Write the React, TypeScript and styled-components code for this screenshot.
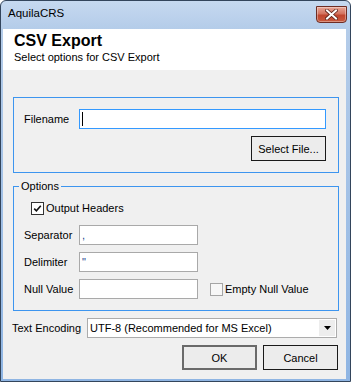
import React from 'react';
import styled, { createGlobalStyle } from 'styled-components';

const GlobalStyle = createGlobalStyle`
  html, body {
    margin: 0;
    padding: 0;
    background: #ffffff;
  }
  body {
    font-family: "Liberation Sans", Arial, sans-serif;
    font-size: 11px;
    color: #000000;
  }
  * {
    box-sizing: border-box;
  }
`;

const Window = styled.div`
  width: 351px;
  height: 382px;
  display: flex;
  flex-direction: column;
  border: 1px solid #33455c;
  border-radius: 6px 6px 0 0;
  background: linear-gradient(#c6d9f0, #b4cce9 28px, #8fb5e3);
  padding: 0 4px 2px 2px;
`;

const TitleBar = styled.div`
  height: 28px;
  display: flex;
  align-items: flex-start;
  justify-content: space-between;
  padding: 4px 0 0 5px;
`;

const TitleText = styled.span`
  font-size: 11.5px;
  line-height: 16px;
  color: #000000;
`;

const CloseButton = styled.div`
  width: 31px;
  height: 17px;
  margin-top: 1px;
  margin-right: -1px;
  border: 1px solid #6e2d24;
  border-radius: 0 0 4px 4px;
  background: linear-gradient(#e9a797, #d3735f 45%, #c0462f 55%, #c85a3e);
  display: flex;
  align-items: center;
  justify-content: center;
  box-shadow: inset 0 0 0 1px rgba(255, 255, 255, 0.35);
`;

const Client = styled.div`
  flex: 1;
  display: flex;
  flex-direction: column;
  background: #f0f0f0;
`;

const Header = styled.div`
  height: 41px;
  background: #ffffff;
  padding: 2px 0 0 11px;
`;

const HeaderTitle = styled.div`
  font-weight: bold;
  font-size: 16px;
  line-height: 19px;
`;

const HeaderSubtitle = styled.div`
  font-size: 11px;
  line-height: 15px;
`;

const Body = styled.div`
  display: flex;
  flex-direction: column;
  padding: 27px 7px 0 9px;
`;

const GroupBox = styled.fieldset<{ $top?: number }>`
  margin: ${(p) => p.$top ?? 0}px 0 0 1px;
  min-width: 0;
  border: 1px solid #3d95ef;
  display: flex;
  flex-direction: column;
  gap: 7px;
`;

const FileGroup = styled(GroupBox)`
  padding: 11px 12px 11px 10px;
`;

const OptionsGroup = styled(GroupBox)`
  padding: 5px 12px 11px 10px;
`;

const Legend = styled.legend`
  margin-left: -5px;
  padding: 0 2px;
  line-height: 13px;
  font-size: 11px;
`;

const Row = styled.div<{ $end?: boolean }>`
  display: flex;
  align-items: center;
  height: 20px;
  justify-content: ${(p) => (p.$end ? 'flex-end' : 'flex-start')};
`;

const Label = styled.span<{ $width: number }>`
  width: ${(p) => p.$width}px;
  flex-shrink: 0;
  white-space: nowrap;
`;

const TextBox = styled.div<{ $width?: number; $focused?: boolean }>`
  ${(p) => (p.$width ? `width: ${p.$width}px;` : 'flex: 1;')}
  height: 20px;
  background: #ffffff;
  border: 1px solid ${(p) => (p.$focused ? '#3399ff' : '#a9a9a9')};
  padding: 0 2px;
  display: flex;
  align-items: center;
  color: #1b3f8f;
  line-height: 16px;
`;

const Caret = styled.span`
  display: inline-block;
  width: 1px;
  height: 14px;
  background: #000000;
`;

const CheckRow = styled.label<{ $indent?: number }>`
  display: flex;
  align-items: center;
  height: 20px;
  padding-left: ${(p) => p.$indent ?? 0}px;
  margin-left: ${(p) => (p.$indent ? 0 : 12)}px;
  white-space: nowrap;
`;

const CheckBox = styled.span<{ $checked?: boolean }>`
  width: 13px;
  height: 13px;
  margin-right: 2px;
  flex-shrink: 0;
  border: 1px solid ${(p) => (p.$checked ? '#333333' : '#a5a5a5')};
  background: ${(p) => (p.$checked ? '#ffffff' : '#f7f7f7')};
  display: flex;
  align-items: center;
  justify-content: center;
`;

const Button = styled.div<{ $default?: boolean }>`
  width: 75px;
  height: 25px;
  display: flex;
  align-items: center;
  justify-content: center;
  background: #ececec;
  border: ${(p) => (p.$default ? '2px solid #6a6a6a' : '1px solid #1a1a1a')};
  white-space: nowrap;
`;

const EncodingRow = styled(Row)`
  margin-top: 7px;
  margin-right: 2px;
`;

const ComboBox = styled.div`
  flex: 1;
  height: 20px;
  display: flex;
  align-items: center;
  background: #ffffff;
  border: 1px solid #acacac;
  padding: 1px;
`;

const ComboText = styled.span`
  flex: 1;
  padding-left: 1px;
  white-space: nowrap;
`;

const ComboArrow = styled.span`
  width: 16px;
  height: 16px;
  background: #ededed;
  display: flex;
  align-items: center;
  justify-content: center;
`;

const DialogButtons = styled.div`
  display: flex;
  justify-content: flex-end;
  gap: 6px;
  margin: 7px 1px 0 0;
`;

const CheckMark = () => (
  <svg width="9" height="9" viewBox="0 0 9 9">
    <path d="M1.2 4.6 L3.4 6.8 L7.8 1.8" fill="none" stroke="#111" strokeWidth="1.6" />
  </svg>
);

const CloseGlyph = () => (
  <svg width="13" height="11" viewBox="0 0 13 11">
    <path d="M2 1.5 L11 9.5 M11 1.5 L2 9.5" stroke="#5a2119" strokeWidth="3.6" strokeLinecap="square" />
    <path d="M2 1.5 L11 9.5 M11 1.5 L2 9.5" stroke="#ffffff" strokeWidth="2" strokeLinecap="square" />
  </svg>
);

const DownArrow = () => (
  <svg width="7" height="4" viewBox="0 0 7 4">
    <path d="M0 0 L7 0 L3.5 4 Z" fill="#000" />
  </svg>
);

export default function App() {
  return (
    <>
      <GlobalStyle />
      <Window>
        <TitleBar>
          <TitleText>AquilaCRS</TitleText>
          <CloseButton>
            <CloseGlyph />
          </CloseButton>
        </TitleBar>
        <Client>
          <Header>
            <HeaderTitle>CSV Export</HeaderTitle>
            <HeaderSubtitle>Select options for CSV Export</HeaderSubtitle>
          </Header>
          <Body>
            <FileGroup>
              <Row>
                <Label $width={55}>Filename</Label>
                <TextBox $focused>
                  <Caret />
                </TextBox>
              </Row>
              <Row $end style={{ height: 25 }}>
                <Button>Select File...</Button>
              </Row>
            </FileGroup>

            <OptionsGroup $top={7}>
              <Legend>Options</Legend>
              <CheckRow $indent={7}>
                <CheckBox $checked>
                  <CheckMark />
                </CheckBox>
                Output Headers
              </CheckRow>
              <Row>
                <Label $width={55}>Separator</Label>
                <TextBox $width={119}>,</TextBox>
              </Row>
              <Row>
                <Label $width={55}>Delimiter</Label>
                <TextBox $width={119}>"</TextBox>
              </Row>
              <Row>
                <Label $width={55}>Null Value</Label>
                <TextBox $width={119} />
                <CheckRow>
                  <CheckBox />
                  Empty Null Value
                </CheckRow>
              </Row>
            </OptionsGroup>

            <EncodingRow>
              <Label $width={75}>Text Encoding</Label>
              <ComboBox>
                <ComboText>UTF-8 (Recommended for MS Excel)</ComboText>
                <ComboArrow>
                  <DownArrow />
                </ComboArrow>
              </ComboBox>
            </EncodingRow>

            <DialogButtons>
              <Button $default>OK</Button>
              <Button>Cancel</Button>
            </DialogButtons>
          </Body>
        </Client>
      </Window>
    </>
  );
}
